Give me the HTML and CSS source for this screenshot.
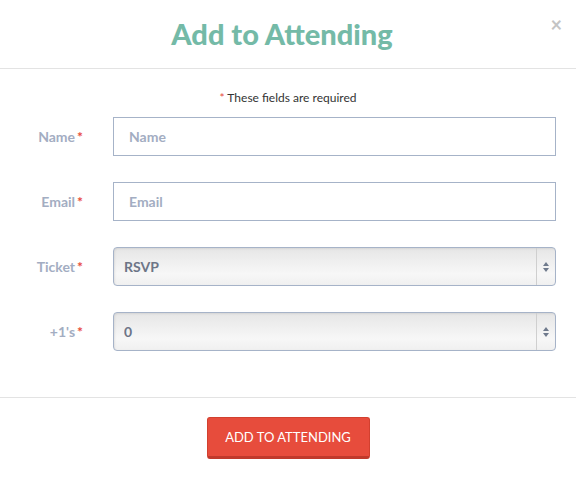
FILE: index.html
```html
<!DOCTYPE html>
<html lang="en">
<head>
<meta charset="UTF-8">
<meta name="viewport" content="width=device-width, initial-scale=1.0">
<title>Add to Attending</title>
<link rel="stylesheet" href="styles.css">
</head>
<body>
<div class="modal">
  <div class="modal-header">
    <h1>Add to Attending</h1>
    <a href="javascript:void(0)" class="closebtn">&times;</a>
  </div>

  <form class="modal-body">
    <p class="note"><span class="req">*</span> These fields are required</p>

    <div class="row">
      <label for="name">Name<span class="req">*</span></label>
      <input type="text" id="name" placeholder="Name">
    </div>
    <div class="row">
      <label for="email">Email<span class="req">*</span></label>
      <input type="text" id="email" placeholder="Email">
    </div>
    <div class="row">
      <label for="ticket">Ticket<span class="req">*</span></label>
      <div class="select">
        <select id="ticket">
          <option>RSVP</option>
        </select>
        <span class="arrows"><i class="up"></i><i class="down"></i></span>
      </div>
    </div>
    <div class="row">
      <label for="plus">+1's<span class="req">*</span></label>
      <div class="select">
        <select id="plus">
          <option>0</option>
          <option>1</option>
          <option>2</option>
        </select>
        <span class="arrows"><i class="up"></i><i class="down"></i></span>
      </div>
    </div>
  </form>

  <div class="modal-footer">
    <button type="button" class="btn">ADD TO ATTENDING</button>
  </div>
</div>
</body>
</html>
```

FILE: styles.css
```css
body {
  margin: 0;
  background-color: #fff;
  font-family: Lato, "Open Sans", sans-serif;
}
.modal {
  width: 576px;
}
.modal-header {
  position: relative;
  height: 68px;
  border-bottom: 1px solid #e3e3e3;
  text-align: center;
}
.modal-header h1 {
  margin: 0;
  padding: 17px 12px 0 0;
  font-size: 29px;
  line-height: 34px;
  font-weight: 900;
  color: #74baa7;
}
.closebtn {
  position: absolute;
  top: 12px;
  right: 14px;
  font-size: 20px;
  font-weight: bold;
  color: #c4c4c4;
  text-decoration: none;
}
.modal-body {
  padding: 22px 20px 46px 20px;
}
.note {
  margin: 0 0 12px 0;
  text-align: center;
  font-size: 12px;
  line-height: 14px;
  color: #333;
}
.req {
  color: #e74c3c;
  margin-left: 2px;
}
.note .req {
  margin: 0;
}
.row {
  display: flex;
  align-items: center;
  margin-bottom: 26px;
}
.row:last-child {
  margin-bottom: 0;
}
.row label {
  width: 63px;
  margin-right: 30px;
  text-align: right;
  font-size: 14px;
  font-weight: bold;
  color: #a3adc2;
}
.row input[type="text"] {
  flex: 1;
  height: 39px;
  box-sizing: border-box;
  padding: 0 15px;
  border: 1px solid #a6b3c8;
  font-family: Lato, sans-serif;
  font-size: 14px;
  font-weight: bold;
  color: #555;
  outline: none;
}
.row input::placeholder {
  color: #a3adc2;
}
.select {
  position: relative;
  flex: 1;
  height: 39px;
}
.select select {
  width: 100%;
  height: 39px;
  box-sizing: border-box;
  -webkit-appearance: none;
  appearance: none;
  padding: 0 30px 0 10px;
  border: 1px solid #a6b3c8;
  border-radius: 4px;
  background: linear-gradient(#e6e6e6, #f7f7f7 70%, #f0f0f0);
  box-shadow: inset 1px 1px 2px rgba(0, 0, 0, 0.08);
  font-family: Lato, sans-serif;
  font-size: 14px;
  font-weight: bold;
  color: #6d7587;
  outline: none;
}
.arrows {
  position: absolute;
  top: 1px;
  right: 1px;
  bottom: 1px;
  width: 18px;
  border-left: 1px solid #cfcfcf;
  display: flex;
  flex-direction: column;
  align-items: center;
  justify-content: center;
  gap: 2px;
  pointer-events: none;
}
.arrows i {
  width: 0;
  height: 0;
  border-left: 3px solid transparent;
  border-right: 3px solid transparent;
}
.arrows .up {
  border-bottom: 4px solid #6f7a8c;
}
.arrows .down {
  border-top: 4px solid #6f7a8c;
}
.modal-footer {
  border-top: 1px solid #e3e3e3;
  padding-top: 19px;
  text-align: center;
}
.btn {
  width: 163px;
  height: 42px;
  background-color: #e74c3c;
  color: #fff;
  border: 1px solid #d2402f;
  border-bottom: 3px solid #c0392b;
  border-radius: 3px;
  font-family: Lato, sans-serif;
  font-size: 13px;
  cursor: pointer;
}
```
